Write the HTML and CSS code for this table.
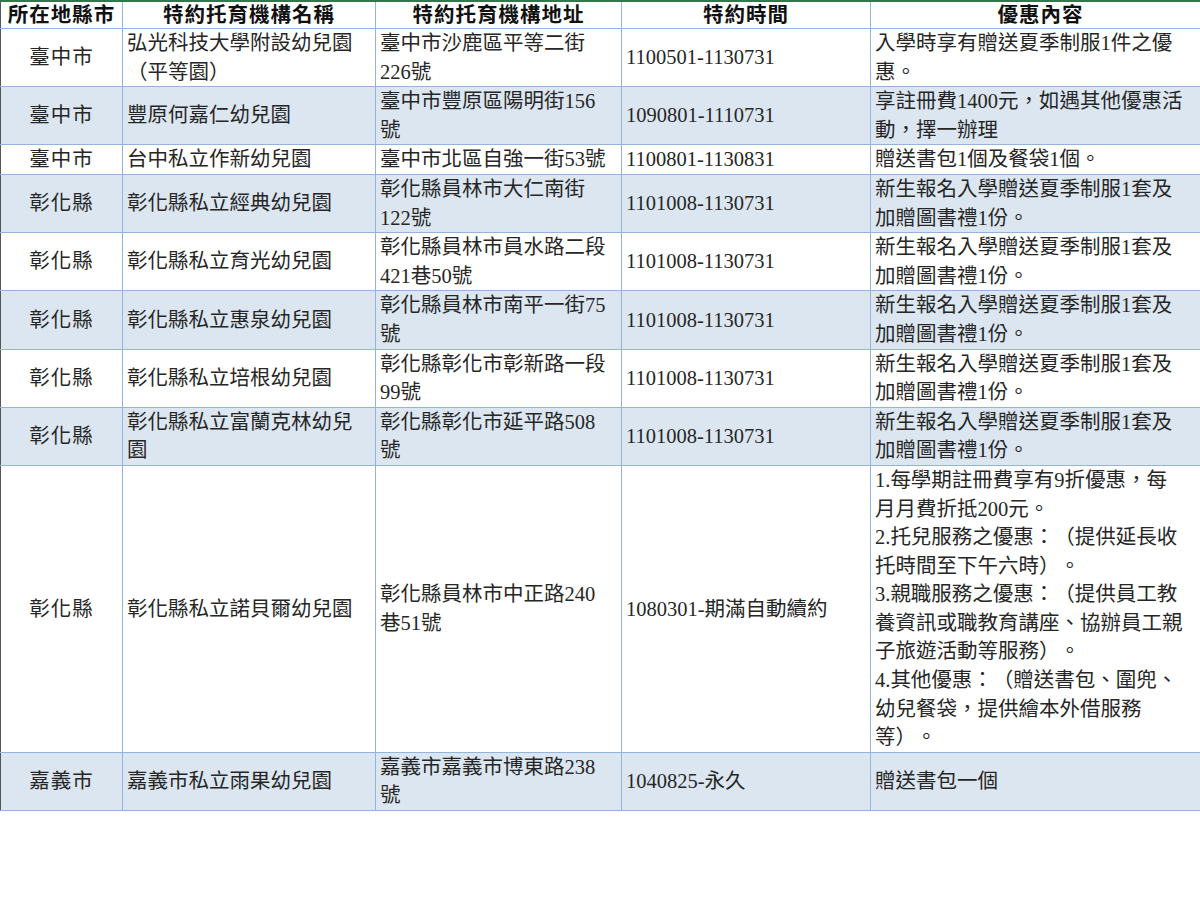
FILE: index.html
```html
<!DOCTYPE html>
<html lang="zh-Hant">
<head>
<meta charset="utf-8">
<title>特約托育機構</title>
<link rel="stylesheet" href="styles.css">
</head>
<body>
<table class="sheet">
  <colgroup>
    <col class="c1"><col class="c2"><col class="c3"><col class="c4"><col class="c5">
  </colgroup>
  <thead>
    <tr class="head">
      <th>所在地縣市</th>
      <th>特約托育機構名稱</th>
      <th>特約托育機構地址</th>
      <th>特約時間</th>
      <th>優惠內容</th>
    </tr>
  </thead>
  <tbody>
    <tr>
      <td class="city">臺中市</td>
      <td>弘光科技大學附設幼兒園<br>（平等園）</td>
      <td>臺中市沙鹿區平等二街<br>226號</td>
      <td>1100501-1130731</td>
      <td>入學時享有贈送夏季制服1件之優<br>惠。</td>
    </tr>
    <tr class="alt">
      <td class="city">臺中市</td>
      <td>豐原何嘉仁幼兒園</td>
      <td>臺中市豐原區陽明街156<br>號</td>
      <td>1090801-1110731</td>
      <td>享註冊費1400元，如遇其他優惠活<br>動，擇一辦理</td>
    </tr>
    <tr>
      <td class="city">臺中市</td>
      <td>台中私立作新幼兒園</td>
      <td>臺中市北區自強一街53號</td>
      <td>1100801-1130831</td>
      <td>贈送書包1個及餐袋1個。</td>
    </tr>
    <tr class="alt">
      <td class="city">彰化縣</td>
      <td>彰化縣私立經典幼兒園</td>
      <td>彰化縣員林市大仁南街<br>122號</td>
      <td>1101008-1130731</td>
      <td>新生報名入學贈送夏季制服1套及<br>加贈圖書禮1份。</td>
    </tr>
    <tr>
      <td class="city">彰化縣</td>
      <td>彰化縣私立育光幼兒園</td>
      <td>彰化縣員林市員水路二段<br>421巷50號</td>
      <td>1101008-1130731</td>
      <td>新生報名入學贈送夏季制服1套及<br>加贈圖書禮1份。</td>
    </tr>
    <tr class="alt">
      <td class="city">彰化縣</td>
      <td>彰化縣私立惠泉幼兒園</td>
      <td>彰化縣員林市南平一街75<br>號</td>
      <td>1101008-1130731</td>
      <td>新生報名入學贈送夏季制服1套及<br>加贈圖書禮1份。</td>
    </tr>
    <tr>
      <td class="city">彰化縣</td>
      <td>彰化縣私立培根幼兒園</td>
      <td>彰化縣彰化市彰新路一段<br>99號</td>
      <td>1101008-1130731</td>
      <td>新生報名入學贈送夏季制服1套及<br>加贈圖書禮1份。</td>
    </tr>
    <tr class="alt">
      <td class="city">彰化縣</td>
      <td>彰化縣私立富蘭克林幼兒<br>園</td>
      <td>彰化縣彰化市延平路508<br>號</td>
      <td>1101008-1130731</td>
      <td>新生報名入學贈送夏季制服1套及<br>加贈圖書禮1份。</td>
    </tr>
    <tr>
      <td class="city">彰化縣</td>
      <td>彰化縣私立諾貝爾幼兒園</td>
      <td>彰化縣員林市中正路240<br>巷51號</td>
      <td>1080301-期滿自動續約</td>
      <td>1.每學期註冊費享有9折優惠，每<br>月月費折抵200元。<br>2.托兒服務之優惠：（提供延長收<br>托時間至下午六時）。<br>3.親職服務之優惠：（提供員工教<br>養資訊或職教育講座、協辦員工親<br>子旅遊活動等服務）。<br>4.其他優惠：（贈送書包、圍兜、<br>幼兒餐袋，提供繪本外借服務<br>等）。</td>
    </tr>
    <tr class="alt">
      <td class="city">嘉義市</td>
      <td>嘉義市私立雨果幼兒園</td>
      <td>嘉義市嘉義市博東路238<br>號</td>
      <td>1040825-永久</td>
      <td>贈送書包一個</td>
    </tr>
  </tbody>
</table>
</body>
</html>
```

FILE: styles.css
```css
html, body {
  margin: 0;
  padding: 0;
  background: #ffffff;
  overflow: hidden;
}

body {
  width: 1200px;
  height: 900px;
}

.sheet {
  border-collapse: collapse;
  table-layout: fixed;
  width: 1210px;
  font-family: "Liberation Serif", "Noto Sans CJK TC", serif;
  font-size: 20.5px;
  color: #262626;
  border-top: 2px solid #2f7a4d;
  text-spacing-trim: space-all;
}

.c1 { width: 122px; }
.c2 { width: 253px; }
.c3 { width: 246px; }
.c4 { width: 249px; }
.c5 { width: 340px; }

.sheet th,
.sheet td {
  border: 1px solid #93b4dc;
  padding: 0 4px 0 4px;
  line-height: 28.6px;
  white-space: nowrap;
  overflow: hidden;
  vertical-align: middle;
  text-align: left;
}

.sheet th:first-child,
.sheet td:first-child {
  border-left: 1px solid #555555;
}

.head th {
  font-weight: bold;
  text-align: center;
  color: #111111;
  line-height: 26px;
  padding: 0 2px;
  letter-spacing: 1px;
}

.sheet td.city {
  text-align: center;
  padding: 0;
  letter-spacing: 1px;
}

.alt td {
  background: #dce6f1;
}
```
